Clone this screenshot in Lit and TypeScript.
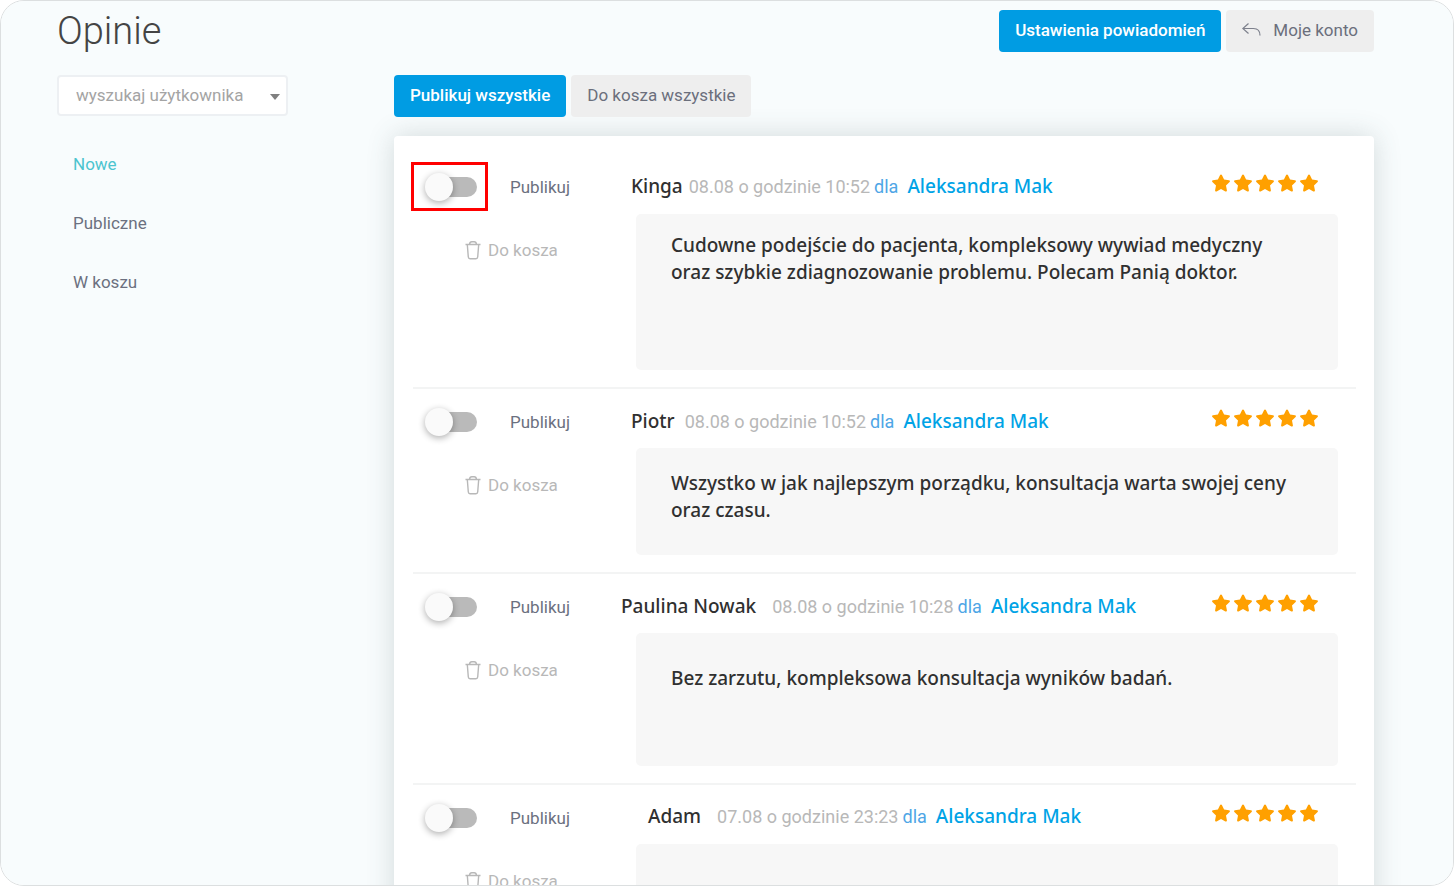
import { LitElement, html, css, svg } from "lit";
import { customElement, property, state } from "lit/decorators.js";
import { classMap } from "lit/directives/class-map.js";

interface Review {
  id: number;
  author: string;
  date: string;
  doctor: string;
  text: string;
  layout: string;
  highlighted?: boolean;
}

const REVIEWS: Review[] = [
  {
    id: 1,
    author: "Kinga",
    date: "08.08 o godzinie 10:52",
    doctor: "Aleksandra Mak",
    text: "Cudowne podejście do pacjenta, kompleksowy wywiad medyczny oraz szybkie zdiagnozowanie problemu. Polecam Panią doktor.",
    layout: "long",
    highlighted: true,
  },
  {
    id: 2,
    author: "Piotr",
    date: "08.08 o godzinie 10:52",
    doctor: "Aleksandra Mak",
    text: "Wszystko w jak najlepszym porządku, konsultacja warta swojej ceny oraz czasu.",
    layout: "medium",
  },
  {
    id: 3,
    author: "Paulina Nowak",
    date: "08.08 o godzinie 10:28",
    doctor: "Aleksandra Mak",
    text: "Bez zarzutu, kompleksowa konsultacja wyników badań.",
    layout: "short",
  },
  {
    id: 4,
    author: "Adam",
    date: "07.08 o godzinie 23:23",
    doctor: "Aleksandra Mak",
    text: "",
    layout: "blank",
  },
];

const star = svg`<path d="M9 .4c.4 0 .7.2.9.6l2.200 4.500 4.900.7c.9.1 1.200 1.100.6 1.700l-3.600 3.500.9 4.900c.1.900-.700 1.500-1.500 1.100L9 15.100l-4.400 2.300c-.8.400-1.600-.200-1.500-1.100l.9-4.900L.4 7.900C-.2 7.300.1 6.300 1 6.200l4.900-.7L8.100 1c.2-.4.5-.6.9-.6z"/>`;

@customElement("review-item")
export class ReviewItem extends LitElement {
  @property({ attribute: false }) review!: Review;

  static styles = css`
    :host {
      display: block;
    }
    .item {
      display: grid;
      grid-template-columns: 208px minmax(0, 1fr);
      padding-bottom: 17px;
      border-bottom: 2px solid #f3f4f4;
    }
    .controls {
      padding: 12px 0 0 12px;
      font-size: 17px;
    }
    .long .controls {
      padding-top: 11px;
    }
    .publish {
      display: flex;
      align-items: center;
      height: 42px;
      gap: 33px;
      color: #6b7080;
    }
    .switch {
      position: relative;
      display: flex;
      align-items: center;
    }
    .toggle {
      appearance: none;
      display: flex;
      align-items: center;
      margin: 0;
      width: 52px;
      height: 20px;
      border-radius: 10px;
      background: linear-gradient(#bababa, #bababa) right / 44px no-repeat;
      cursor: pointer;
    }
    .toggle::before {
      content: "";
      width: 28px;
      height: 28px;
      border-radius: 50%;
      background: #fafafa;
      box-shadow: 0 2px 7px rgba(0, 0, 0, 0.32);
    }
    .toggle:checked {
      background-image: linear-gradient(#80cdf0, #80cdf0);
    }
    .toggle:checked::before {
      margin-left: auto;
      background: #009ce3;
    }
    .marked::after {
      content: "";
      position: absolute;
      inset: -15px -11px -14px -14px;
      border: 3px solid #ff0000;
      pointer-events: none;
    }
    .trash {
      display: flex;
      align-items: center;
      gap: 7px;
      margin: 28px 0 0 40px;
      padding: 0;
      height: 28px;
      border: 0;
      background: none;
      font: inherit;
      color: #b8b8b8;
      cursor: pointer;
    }
    .trash svg {
      width: 16px;
      height: 20px;
      fill: none;
      stroke: currentColor;
      stroke-width: 1.4;
    }
    .head {
      display: flex;
      align-items: center;
      height: 59px;
      padding: 4px 38px 0 0;
      box-sizing: border-box;
      white-space: nowrap;
      gap: 16px;
    }
    .meta {
      display: flex;
      align-items: center;
      gap: 4px;
    }
    .author,
    .doctor,
    .body {
      font-family: "Noto Sans", "Open Sans", sans-serif;
      font-size: 19px;
      font-weight: 500;
      line-height: 27px;
      color: #303030;
    }
    .date {
      color: #b8b8b8;
    }
    .for {
      color: #4ea6e6;
    }
    .meta .doctor {
      margin-left: 5px;
      color: #00a3e6;
      text-decoration: none;
    }
    .stars {
      display: flex;
      gap: 4px;
      margin: 0 0 8px auto;
    }
    .stars svg {
      width: 18px;
      height: 18px;
      fill: #ffa000;
    }
    .body {
      margin: 0 18px 0 15px;
      padding: 18px 35px;
      box-sizing: border-box;
      min-height: 133px;
      border-radius: 5px;
      background: #f7f7f7;
    }
    .long .head {
      padding-left: 10px;
      gap: 6px;
    }
    .medium .head {
      padding-top: 6px;
      padding-left: 10px;
      gap: 10px;
    }
    .short .head {
      padding-top: 6px;
    }
    .blank .head {
      padding-left: 27px;
    }
    .long .body {
      min-height: 156px;
    }
    .medium .body {
      min-height: 107px;
      padding-top: 22px;
    }
    .short .body {
      padding-top: 32px;
    }
  `;

  render() {
    const r = this.review;
    const id = `publish-${r.id}`;
    return html`
      <article class="item ${r.layout}">
        <div class="controls">
          <div class="publish">
            <span class=${classMap({ switch: true, marked: !!r.highlighted })}>
              <input class="toggle" type="checkbox" id=${id} />
            </span>
            <label for=${id}>Publikuj</label>
          </div>
          <button class="trash" type="button">
            <svg viewBox="0 0 16 20" aria-hidden="true">
              <path d="M.5 4.500h15M2.300 4.500l1 12.500c.1 1 .7 1.700 1.700 1.700h6c1 0 1.600-.7 1.700-1.700l1-12.500M4.500 4.300c.2-1.800 1-2.600 2.300-2.600h2.400c1.300 0 2.100.8 2.300 2.600" />
            </svg>
            Do kosza
          </button>
        </div>
        <div>
          <header class="head">
            <span class="author">${r.author}</span>
            <span class="meta">
              <span class="date">${r.date}</span>
              <span class="for">dla</span>
              <a class="doctor" href="#">${r.doctor}</a>
            </span>
            <span class="stars" role="img" aria-label="5/5">
              ${[1, 2, 3, 4, 5].map(() => html`<svg viewBox="0 0 18 18">${star}</svg>`)}
            </span>
          </header>
          <div class="body">${r.text}</div>
        </div>
      </article>
    `;
  }
}

@customElement("app-root")
export class AppRoot extends LitElement {
  @state() private folder = "Nowe";

  static styles = css`
    :host {
      display: block;
      height: 100vh;
      background: #fff;
      font-family: Roboto, sans-serif;
      font-size: 18px;
      line-height: 27px;
    }
    .page {
      height: 100%;
      box-sizing: border-box;
      border: 1px solid #dcdfe0;
      border-radius: 24px;
      background: #f8fcfd;
      padding: 9px 79px 0 56px;
      overflow-y: auto;
      scrollbar-width: none;
    }
    .top {
      display: flex;
      align-items: center;
      justify-content: space-between;
      margin-bottom: 23px;
    }
    h1 {
      margin: 0;
      font-size: 38px;
      font-weight: 300;
      line-height: 42px;
      color: #444;
    }
    .actions {
      display: flex;
      gap: 5px;
    }
    .btn {
      display: flex;
      align-items: center;
      height: 42px;
      padding: 0 16px 2px;
      border: 0;
      border-radius: 4px;
      background: #eee;
      color: #6b6f7c;
      font: inherit;
      font-size: 17px;
      white-space: nowrap;
      cursor: pointer;
    }
    .primary {
      background: #009ce3;
      color: #fff;
      font-weight: 500;
    }
    .btn svg {
      width: 19px;
      height: 16px;
      margin-right: 12px;
      fill: none;
      stroke: #7d808c;
      stroke-width: 1.2;
    }
    .columns {
      display: grid;
      grid-template-columns: 231px minmax(0, 1fr);
      gap: 106px;
    }
    .search {
      display: grid;
      align-items: center;
    }
    .search > * {
      grid-area: 1 / 1;
    }
    select {
      appearance: none;
      width: 100%;
      height: 41px;
      padding: 0 34px 0 17px;
      border: 2px solid #edf0f3;
      border-radius: 4px;
      background: #fff;
      color: #a4a4a4;
      font: inherit;
      font-size: 17px;
    }
    .caret {
      justify-self: end;
      margin: 3px 8px 0 0;
      border: solid transparent;
      border-width: 6px 5px 0;
      border-top-color: #808080;
      pointer-events: none;
    }
    nav {
      display: flex;
      flex-direction: column;
      margin-top: 19px;
      padding-left: 16px;
    }
    nav a {
      font-size: 17px;
      line-height: 59px;
      color: #6b7080;
      text-decoration: none;
    }
    nav a.active {
      color: #4cc4cf;
    }
    .card {
      margin-top: 19px;
      padding: 19px 18px 0 19px;
      border-radius: 4px;
      background: #fff;
      box-shadow: 0 0 28px rgba(60, 80, 80, 0.2);
    }
  `;

  render() {
    return html`
      <div class="page">
        <header class="top">
          <h1>Opinie</h1>
          <div class="actions">
            <button class="btn primary" type="button">Ustawienia powiadomień</button>
            <button class="btn" type="button">
              <svg viewBox="0 0 19 16" aria-hidden="true">
                <path d="M6.500 1.500L.8 6.500l5.700 5M.8 6.500h10.700c4 0 6.500 2.500 6.500 7" />
              </svg>
              Moje konto
            </button>
          </div>
        </header>
        <div class="columns">
          <aside>
            <div class="search">
              <select aria-label="wyszukaj użytkownika">
                <option>wyszukaj użytkownika</option>
              </select>
              <span class="caret"></span>
            </div>
            <nav>
              ${["Nowe", "Publiczne", "W koszu"].map(
                (name) => html`<a
                  href="#"
                  class=${classMap({ active: name === this.folder })}
                  @click=${(e: Event) => {
                    e.preventDefault();
                    this.folder = name;
                  }}
                  >${name}</a
                >`
              )}
            </nav>
          </aside>
          <main>
            <div class="actions">
              <button class="btn primary" type="button">Publikuj wszystkie</button>
              <button class="btn" type="button">Do kosza wszystkie</button>
            </div>
            <section class="card">
              ${REVIEWS.map((r) => html`<review-item .review=${r}></review-item>`)}
            </section>
          </main>
        </div>
      </div>
    `;
  }
}
